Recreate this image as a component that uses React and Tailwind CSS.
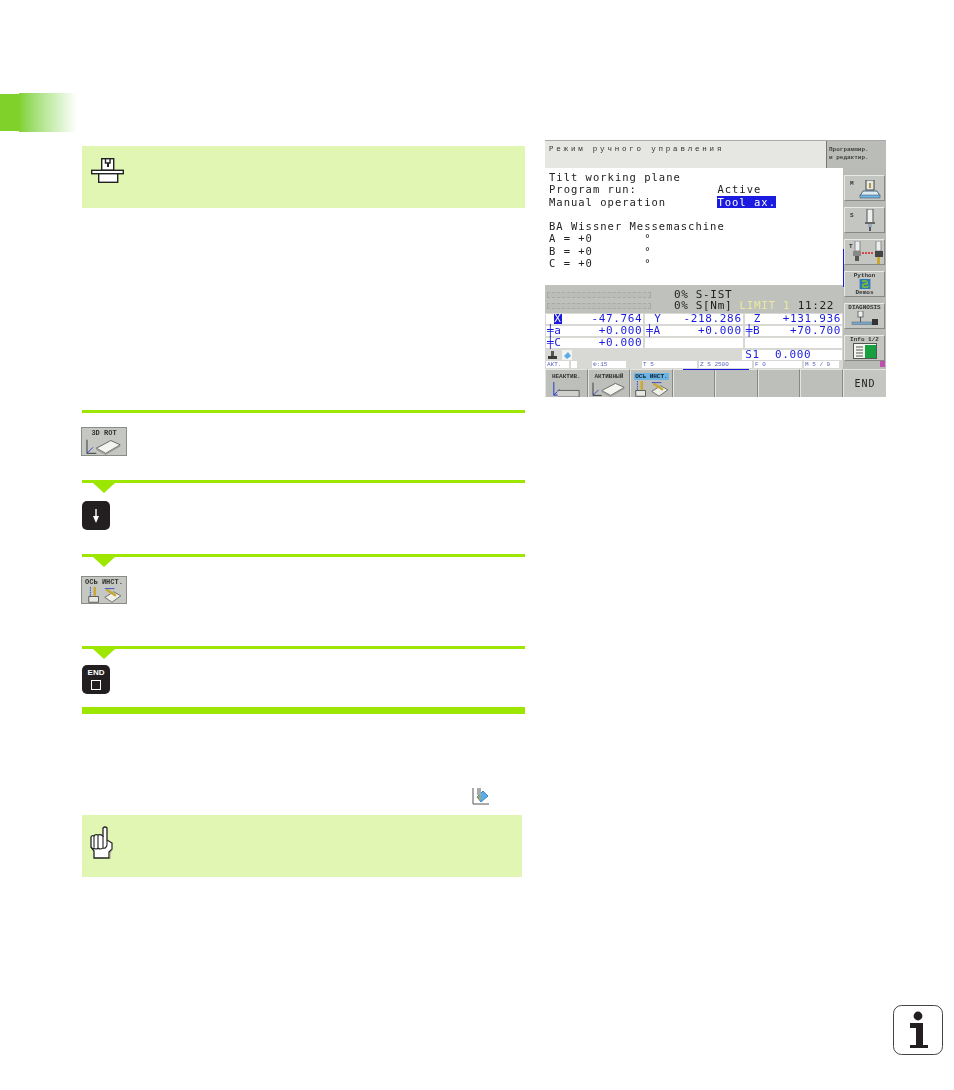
import React from "react";

const mono = "font-['Liberation_Mono',monospace]";
const screenFont = "font-['DejaVu_Sans_Mono',monospace]";

const PlateIcon = ({ className }) => (
  <svg viewBox="0 0 46 20" className={className}>
    <path d="M3 2 L3 18 L14 18" fill="none" stroke="#222" strokeWidth="1" />
    <path d="M3 18 L10 11" fill="none" stroke="#2233cc" strokeWidth="1" />
    <path d="M14 12 L31 3 L42 8 L25 18 Z" fill="#f4f4f0" stroke="#555" strokeWidth="1" />
    <path d="M14 12 L14 14 L25 20 L42 10 L42 8 L25 18 Z" fill="#999" />
  </svg>
);

const ToolAxisIcon = ({ className }) => (
  <svg viewBox="0 0 46 20" className={className}>
    <path d="M6 0 V11" stroke="#2233cc" strokeWidth="1" strokeDasharray="2 1" />
    <rect x="10" y="0" width="3" height="11" fill="#c9a830" />
    <rect x="4" y="12" width="12" height="7" fill="#e8e8e2" stroke="#444" strokeWidth="1" />
    <path d="M24 13 L35 6 L44 11 L33 19 Z" fill="#f0f0ea" stroke="#555" strokeWidth="1" />
    <path d="M26 3 L38 11" stroke="#c9a830" strokeWidth="3" />
    <path d="M24 2 L36 2" stroke="#2233cc" strokeWidth="1" />
  </svg>
);

const MachineIcon = () => (
  <svg viewBox="0 0 34 27" className="h-[27px] w-[34px]">
    <rect x="10.7" y="0.7" width="12" height="11.6" fill="#fff" stroke="#222" strokeWidth="1.4" />
    <path d="M14.5 0.7 V5 H19 V0.7" fill="none" stroke="#222" strokeWidth="1.4" />
    <rect x="16" y="5" width="2" height="4" fill="#222" />
    <rect x="0.7" y="12.3" width="31.6" height="3.4" fill="#fff" stroke="#222" strokeWidth="1.4" />
    <rect x="7.7" y="15.7" width="19" height="8.6" fill="#fff" stroke="#222" strokeWidth="1.4" />
  </svg>
);

const HandIcon = () => (
  <svg viewBox="0 0 23 33" className="h-[33px] w-[23px]">
    <path
      d="M13 2 Q15 0 17 2 V14 L22 17 V23 L19 26 V32 H4 V25 L1 21 V11 Q2 9 4 10 Q5 8 8 9 Q10 8 13 10 Z"
      fill="#fff"
      stroke="#222"
      strokeWidth="1.3"
    />
    <path d="M4 10 V21 M8 9 V22 M13 10 V22 M1 21 Q3 24 4 22 Q6 24 8 22 Q10 24 13 22 Q16 23 17 19 V14" fill="none" stroke="#222" strokeWidth="1.1" />
    <path d="M22 18 V24 L20 27 V33" fill="none" stroke="#888" strokeWidth="0.8" />
  </svg>
);

const InfoIcon = () => (
  <svg viewBox="0 0 50 50" className="h-[50px] w-[50px]">
    <rect x="0.5" y="0.5" width="49" height="49" rx="8" fill="#fff" stroke="#444" strokeWidth="1" />
    <circle cx="25" cy="11" r="4.4" fill="#231f20" />
    <path d="M17 18 H30 V40 H35 V43 H17 V40 H23 V23 H17 Z" fill="#231f20" />
  </svg>
);

const SmallViewIcon = () => (
  <svg viewBox="0 0 17 17" className="h-[17px] w-[17px]">
    <path d="M1 0 V16 H17" fill="none" stroke="#555" strokeWidth="1" />
    <path d="M5 9 L11 3 L16 8 L9 14 Z" fill="#5aaee8" stroke="#2a6fb0" strokeWidth="0.8" />
    <rect x="5" y="0" width="4" height="7" fill="#aaa" />
    <rect x="7" y="7" width="1.5" height="5" fill="#c9a020" />
  </svg>
);

// green rule, with the arrow that points at the next step
const StepLine = ({ className, arrow }) => (
  <div className={`relative h-[3px] w-full bg-[#9de600] ${className}`}>
    {arrow && (
      <svg viewBox="0 0 22 10" className="absolute left-[11px] top-[3px] h-[10px] w-[22px]">
        <path d="M0 0 H22 L11 10 Z" fill="#9de600" />
      </svg>
    )}
  </div>
);

const ManualSoftkey = ({ label, className, children }) => (
  <div className={`flex w-[46px] flex-col items-center border border-[#8a8c88] bg-[#c4c7c2] pt-[1px] blur-[0.3px] ${className}`}>
    <span className={`${mono} text-[7px] leading-[9px] font-bold text-[#333] whitespace-nowrap`}>{label}</span>
    {children}
  </div>
);

const SideButton = ({ children }) => (
  <div className="relative flex h-[26px] w-[41px] flex-col items-center border-t border-l border-t-[#e8e8e4] border-l-[#e8e8e4] border-b border-r border-b-[#888] border-r-[#888] bg-[#c4c6c1]">
    {children}
  </div>
);

const SideLabel = ({ children }) => (
  <span className={`${mono} text-[6px] leading-[7px] font-bold text-[#333] whitespace-nowrap`}>{children}</span>
);

const PositionCell = ({ axis, value, mark, indent }) => (
  <div className={`flex h-[10px] flex-1 items-center justify-between bg-white pr-[1px] ${screenFont} text-[11px] tracking-[0.65px] text-[#1a1ae0]`}>
    {mark ? (
      <span className="ml-[8px] flex h-[10px] w-[8px] items-center justify-center bg-[#1a1ae0] text-white">{axis}</span>
    ) : (
      <span className={indent ? "ml-[9px]" : "ml-[1px]"}>{axis}</span>
    )}
    <span>{value}</span>
  </div>
);

const StatusCell = ({ className, children }) => (
  <div className={`h-[7px] bg-white pl-[1px] ${mono} text-[6px] leading-[7px] text-[#5a62c0] whitespace-nowrap ${className}`}>
    {children}
  </div>
);

const Softkey = ({ label, active, className, children }) => (
  <div className={`flex h-full flex-1 flex-col items-center border-l border-t border-l-[#e4e4e0] border-t-[#e4e4e0] border-r border-r-[#888] bg-[#bdbfba] pt-[3px] ${className}`}>
    {label && (
      <span className={`${mono} px-[1px] text-[6px] leading-[7px] font-bold whitespace-nowrap ${active ? "bg-[#6cb4e4] text-[#123]" : "text-[#333]"}`}>
        {label}
      </span>
    )}
    {children}
  </div>
);

const ControlScreen = () => (
  <div className="flex h-[257px] w-[341px] flex-col bg-[#b9bbb6] blur-[0.35px]">
    <div className="flex h-[28px] border-t border-[#aaa]">
      <div className={`flex-1 border-r border-[#777] bg-[#e6e7e3] pl-[4px] pt-[4px] ${mono} text-[7.5px] leading-[9px] tracking-[2.8px] text-[#333] whitespace-nowrap`}>
        Режим ручного управления
      </div>
      <div className={`w-[59px] bg-[#babcb7] pl-[2px] pt-[5px] ${mono} text-[6px] leading-[7.5px] font-bold text-[#444]`}>
        <div>Программир.</div>
        <div>и редактир.</div>
      </div>
    </div>

    <div className="flex h-[201px]">
      <div className="flex w-[298px] flex-col">
        <div className={`h-[117px] bg-white pl-[4px] pt-[3px] ${screenFont} text-[10.5px] leading-[12.3px] tracking-[1px] text-[#222] whitespace-pre`}>
          <div>Tilt working plane</div>
          <div>Program run:           Active</div>
          <div>
            Manual operation       <span className="bg-[#1a1ae0] text-white">Tool ax.</span>
          </div>
          <div>&nbsp;</div>
          <div>BA Wissner Messemaschine</div>
          <div>A = +0       °</div>
          <div>B = +0       °</div>
          <div>C = +0       °</div>
        </div>

        <div className="flex h-[28px] bg-[#bfc1bc] pl-[2px]">
          <div className="flex w-[104px] flex-col gap-[5px] pt-[7px]">
            <div className="h-[6px] border border-dashed border-[#a8aaa5] bg-[#bbbdb8]" />
            <div className="h-[6px] border border-dashed border-[#a8aaa5] bg-[#bbbdb8]" />
          </div>
          <div className={`ml-[23px] pt-[4px] ${screenFont} text-[11px] leading-[11px] tracking-[0.65px] text-[#222] whitespace-pre`}>
            <div>0% S-IST</div>
            <div>
              0% S[Nm] <span className="text-[#ece8a0]">LIMIT 1</span> 11:22
            </div>
          </div>
        </div>

        <div className="flex flex-1 flex-col gap-[2px] bg-[#d8d9d5] px-[1px] pt-[1px]">
          <div className="flex gap-[2px]">
            <PositionCell axis="X" value="-47.764" mark />
            <PositionCell axis="Y" value="-218.286" indent />
            <PositionCell axis="Z" value="+131.936" indent />
          </div>
          <div className="flex gap-[2px]">
            <PositionCell axis="╪a" value="+0.000" />
            <PositionCell axis="╪A" value="+0.000" />
            <PositionCell axis="╪B" value="+70.700" />
          </div>
          <div className="flex gap-[2px]">
            <PositionCell axis="╪C" value="+0.000" />
            <PositionCell axis="" value="" />
            <PositionCell axis="" value="" />
          </div>
          <div className="flex h-[10px] items-center gap-[2px]">
            <div className="flex flex-[2] items-center gap-[4px] pl-[1px]">
              <svg viewBox="0 0 11 9" className="h-[9px] w-[11px]">
                <rect x="4" y="0" width="3" height="5" fill="#555" />
                <rect x="1" y="5" width="9" height="3" fill="#3a3a3a" />
              </svg>
              <svg viewBox="0 0 10 10" className="h-[10px] w-[10px]">
                <rect width="10" height="10" fill="#f2f2ee" />
                <path d="M2 6 L6 2 L9 6 L5 9 Z" fill="#5aaee8" />
              </svg>
            </div>
            <div className={`flex h-[10px] flex-1 items-center gap-[15px] bg-white pl-[3px] ${screenFont} text-[11px] tracking-[0.65px] text-[#1a1ae0]`}>
              <span>S1</span>
              <span>0.000</span>
            </div>
          </div>
          <div className="-mt-[1px] flex gap-[2px]">
            <StatusCell className="w-[23px]">АКТ.</StatusCell>
            <StatusCell className="w-[6px]" />
            <StatusCell className="ml-[13px] w-[34px]">⊕:15</StatusCell>
            <StatusCell className="ml-[14px] w-[55px]">T 5</StatusCell>
            <StatusCell className="w-[53px]">Z S 2500</StatusCell>
            <StatusCell className="w-[48px]">F 0</StatusCell>
            <StatusCell className="w-[35px]">M 5 / 9</StatusCell>
          </div>
        </div>
      </div>

      <div className="relative flex w-[43px] flex-col items-center gap-[6px] pt-[7px]">
        <div className="absolute left-0 top-[81px] h-[38px] w-[1px] bg-[#1a1ae0]" />
        <SideButton>
          <span className={`${mono} absolute left-[5px] top-[4px] text-[6px] leading-[7px] font-bold text-[#333]`}>M</span>
          <svg viewBox="0 0 22 19" className="absolute left-[14px] top-[4px] h-[19px] w-[22px]">
            <rect x="7" y="0" width="8" height="10" fill="#e8e8e4" stroke="#444" strokeWidth="1" />
            <rect x="10" y="3" width="2" height="5" fill="#a89a40" />
            <path d="M1 16 L4 11 H18 L21 16 Z" fill="#dcebf4" stroke="#4a6a80" strokeWidth="1" />
            <rect x="1" y="15" width="20" height="3" fill="#6cb4e4" stroke="#445" strokeWidth="0.5" />
          </svg>
        </SideButton>
        <SideButton>
          <span className={`${mono} absolute left-[5px] top-[4px] text-[6px] leading-[7px] font-bold text-[#333]`}>S</span>
          <svg viewBox="0 0 12 22" className="absolute left-[19px] top-[1px] h-[22px] w-[12px]">
            <rect x="3" y="0" width="6" height="14" fill="#eee" stroke="#555" strokeWidth="1" />
            <rect x="1" y="13" width="10" height="2" fill="#666" />
            <rect x="4" y="15" width="4" height="3" fill="#9ab" />
            <rect x="5" y="18" width="2" height="4" fill="#556" />
          </svg>
        </SideButton>
        <SideButton>
          <span className={`${mono} absolute left-[4px] top-[3px] text-[6px] leading-[7px] font-bold text-[#333]`}>T</span>
          <svg viewBox="0 0 32 24" className="absolute left-[7px] top-[1px] h-[24px] w-[32px]">
            <rect x="3" y="0" width="5" height="10" fill="#eee" stroke="#777" strokeWidth="0.8" />
            <rect x="1" y="10" width="8" height="5" fill="#888" />
            <rect x="3" y="15" width="4" height="5" fill="#555" />
            <rect x="24" y="0" width="5" height="10" fill="#eee" stroke="#777" strokeWidth="0.8" />
            <rect x="23" y="10" width="8" height="6" fill="#444" />
            <rect x="25" y="16" width="3" height="7" fill="#c9a830" />
            <path d="M10 12 H22" stroke="#e01818" strokeWidth="1.5" strokeDasharray="2 1" />
          </svg>
        </SideButton>
        <SideButton>
          <SideLabel>Python</SideLabel>
          <svg viewBox="0 0 14 13" className="h-[13px] w-[14px]">
            <rect width="14" height="13" fill="#2a78b8" />
            <path d="M3 3 Q11 1 10 6 Q3 6 4 10 Q9 12 12 9" fill="none" stroke="#7fc030" strokeWidth="2" />
          </svg>
          <SideLabel>Demos</SideLabel>
        </SideButton>
        <SideButton>
          <SideLabel>DIAGNOSIS</SideLabel>
          <svg viewBox="0 0 28 16" className="h-[16px] w-[28px]">
            <rect x="7" y="0" width="5" height="6" fill="#eee" stroke="#555" strokeWidth="0.8" />
            <path d="M9.5 6 V11" stroke="#555" strokeWidth="1" />
            <rect x="1" y="11" width="20" height="2.5" fill="#7aa8c8" stroke="#567" strokeWidth="0.5" />
            <rect x="21" y="8" width="6" height="6" fill="#333" />
          </svg>
        </SideButton>
        <SideButton>
          <SideLabel>Info 1/2</SideLabel>
          <svg viewBox="0 0 24 16" className="h-[16px] w-[24px]">
            <rect x="0.5" y="0.5" width="23" height="15" fill="#f4f4f0" stroke="#555" strokeWidth="1" />
            <path d="M3 4 H10 M3 7 H10 M3 10 H10 M3 13 H10" stroke="#555" strokeWidth="1" />
            <rect x="12" y="2" width="11" height="13" fill="#16a040" />
          </svg>
        </SideButton>
        <div className="absolute bottom-[2px] right-[1px] h-[6px] w-[5px] bg-[#c050b0]" />
      </div>
    </div>

    <div className="relative flex h-[28px]">
      <div className="absolute left-[138px] top-0 h-[1px] w-[66px] bg-[#1a1ae0]" />
      <Softkey label="НЕАКТИВ.">
        <svg viewBox="0 0 30 16" className="mt-[2px] h-[16px] w-[30px]">
          <path d="M2 0 V14 L10 14" fill="none" stroke="#2233cc" strokeWidth="1" />
          <path d="M2 14 L8 8" stroke="#2233cc" strokeWidth="1" />
          <path d="M6 9 H29 V16 H6" fill="#cfd0cb" stroke="#444" strokeWidth="0.8" />
        </svg>
      </Softkey>
      <Softkey label="АКТИВНЫЙ">
        <PlateIcon className="mt-[1px] h-[17px] w-[38px]" />
      </Softkey>
      <Softkey label="ОСЬ ИНСТ." active>
        <ToolAxisIcon className="mt-[1px] h-[17px] w-[38px]" />
      </Softkey>
      <Softkey />
      <Softkey />
      <Softkey />
      <Softkey />
      <div className={`flex h-full w-[43px] items-center justify-center border-l border-t border-l-[#e4e4e0] border-t-[#e4e4e0] bg-[#c4c6c1] ${screenFont} text-[10px] tracking-[1px] text-[#222]`}>
        END
      </div>
    </div>
  </div>
);

export default function App() {
  return (
    <div className="h-[1090px] w-[954px] bg-white">
      <div className="flex pt-[93px]">
        <div className="my-[1px] h-[37px] w-[19px] bg-[#80d12a]" />
        <div className="h-[39px] w-[58px] bg-gradient-to-r from-[#80d12a] to-white" />
      </div>

      <div className="mt-[8px] flex gap-[20px] pl-[82px]">
        <div className="flex w-[443px] flex-col pt-[6px]">
          <div className="flex h-[62px] items-start bg-[#e0f6b2] pl-[9px] pt-[12px]">
            <MachineIcon />
          </div>

          <StepLine className="mt-[202px]" />
          <ManualSoftkey label="3D ROT" className="mt-[14px] -ml-[1px] h-[29px]">
            <PlateIcon className="h-[18px] w-[42px]" />
          </ManualSoftkey>

          <StepLine className="mt-[24px]" arrow />
          <div className="mt-[18px] flex h-[29px] w-[28px] items-center justify-center rounded-[5px] bg-[#231f20]">
            <svg viewBox="0 0 8 14" className="h-[14px] w-[8px]">
              <path d="M3.3 0 H4.7 V7 H7 L4 14 L1 7 H3.3 Z" fill="#fff" />
            </svg>
          </div>

          <StepLine className="mt-[24px]" arrow />
          <ManualSoftkey label="ОСЬ ИНСТ." className="mt-[19px] -ml-[1px] h-[28px]">
            <ToolAxisIcon className="h-[18px] w-[40px]" />
          </ManualSoftkey>

          <StepLine className="mt-[42px]" arrow />
          <div className="mt-[16px] flex h-[29px] w-[28px] flex-col items-center rounded-[5px] bg-[#231f20] pt-[3px]">
            <span className="font-['Liberation_Sans',sans-serif] text-[8px] leading-[9px] font-bold text-white">END</span>
            <div className="mt-[3px] h-[10px] w-[10px] border border-white" />
          </div>

          <div className="mt-[13px] h-[7px] w-full bg-[#9de600]" />

          <div className="mt-[74px] flex h-[17px] pl-[390px]">
            <SmallViewIcon />
          </div>

          <div className="mt-[10px] flex h-[62px] w-[440px] items-start bg-[#e0f6b2] pl-[8px] pt-[11px]">
            <HandIcon />
          </div>
        </div>

        <ControlScreen />
      </div>

      <div className="mt-[128px] flex justify-end pr-[11px]">
        <InfoIcon />
      </div>
    </div>
  );
}
